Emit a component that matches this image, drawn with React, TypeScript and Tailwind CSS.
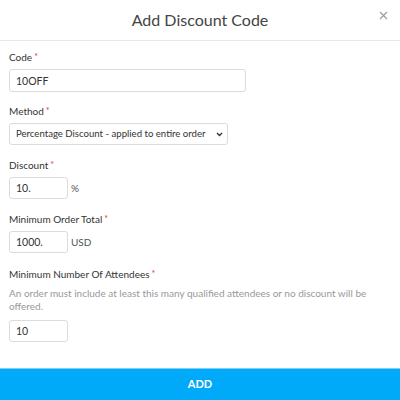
import React, { useState } from "react";

const Req = () => <span className="ml-[2px] text-[9px] align-top text-[#e53935]">*</span>;

const App = () => {
  const [form, setForm] = useState({
    code: "10OFF",
    method: "percent",
    discount: "10.",
    minTotal: "1000.",
    minAttendees: "10",
  });

  const handleChange = (e: React.ChangeEvent<HTMLInputElement | HTMLSelectElement>) => {
    const { name, value } = e.target;
    setForm({ ...form, [name]: value });
  };

  const inputCls =
    "h-[22px] rounded-[3px] border border-[#dcdcdc] px-[6px] text-[10.5px] text-[#333] outline-none";

  return (
    <div className="flex h-[400px] w-[400px] flex-col bg-white font-['Lato',sans-serif] text-[#333]">
      <div className="relative flex h-[41px] items-center justify-center border-b border-[#e8e8e8]">
        <h1 className="text-[16px] text-[#444]">Add Discount Code</h1>
        <button className="absolute right-[12px] top-[11px] text-[#999]">
          <svg width="9" height="9" viewBox="0 0 9 9" stroke="currentColor" strokeWidth="1.1">
            <path d="M1 1l7 7M8 1l-7 7" />
          </svg>
        </button>
      </div>

      <div className="flex flex-1 flex-col px-[9px] pt-[9px] text-[10px] leading-[14px]">
        <label className="mb-[5px]">
          Code<Req />
        </label>
        <input name="code" value={form.code} onChange={handleChange} className={`${inputCls} h-[23px] w-[237px]`} />

        <label className="mb-[5px] mt-[12px]">
          Method<Req />
        </label>
        <div className="relative w-[219px]">
          <select
            name="method"
            value={form.method}
            onChange={handleChange}
            className="h-[22px] w-full appearance-none rounded-[3px] border border-[#dcdcdc] bg-white pl-[6px] pr-[12px] text-[9.6px] text-[#333] outline-none"
          >
            <option value="percent">Percentage Discount - applied to entire order</option>
            <option value="fixed">Fixed Amount</option>
          </select>
          <svg
            className="pointer-events-none absolute right-[5px] top-[9px] text-[#333]"
            width="7"
            height="5"
            viewBox="0 0 7 5"
            fill="none"
            stroke="currentColor"
            strokeWidth="1.4"
          >
            <path d="M1 1l2.5 2.5L6 1" />
          </svg>
        </div>

        <label className="mb-[5px] mt-[13px]">
          Discount<Req />
        </label>
        <div className="flex items-center gap-[3px]">
          <input name="discount" value={form.discount} onChange={handleChange} className={`${inputCls} w-[59px]`} />
          <span className="text-[#555]">%</span>
        </div>

        <label className="mb-[5px] mt-[13px]">
          Minimum Order Total<Req />
        </label>
        <div className="flex items-center gap-[3px]">
          <input name="minTotal" value={form.minTotal} onChange={handleChange} className={`${inputCls} w-[59px]`} />
          <span className="text-[#555]">USD</span>
        </div>

        <label className="mt-[14px]">
          Minimum Number Of Attendees<Req />
        </label>
        <p className="mb-[7px] mt-[6px] leading-[13px] text-[#999]">
          An order must include at least this many qualified attendees or no discount will be offered.
        </p>
        <input name="minAttendees" value={form.minAttendees} onChange={handleChange} className={`${inputCls} w-[59px]`} />
      </div>

      <button className="h-[32px] w-full border-t border-[#7fd0fb] bg-[#00aaf8] text-[11px] font-bold text-white">
        ADD
      </button>
    </div>
  );
};

export default App;
